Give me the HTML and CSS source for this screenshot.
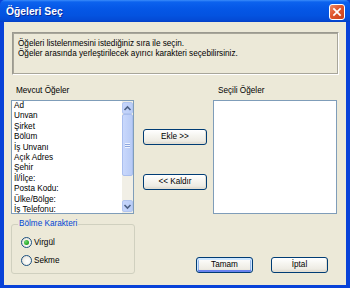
FILE: index.html
```html
<!DOCTYPE html>
<html lang="tr">
<head>
<meta charset="utf-8">
<title>Öğeleri Seç</title>
<link rel="stylesheet" href="styles.css">
</head>
<body>
<div class="window">
  <div class="titlebar">
    <span class="title">Öğeleri Seç</span>
    <span class="close">
      <svg width="16" height="16" viewBox="0 0 16 16"><path d="M4.5 4.5 L11.5 11.5 M11.5 4.5 L4.5 11.5" stroke="#fff" stroke-width="2" stroke-linecap="square"/></svg>
    </span>
  </div>
  <div class="client">
    <div class="info">
      <p>Öğeleri listelenmesini istediğiniz sıra ile seçin.</p>
      <p>Öğeler arasında yerleştirilecek ayırıcı karakteri seçebilirsiniz.</p>
    </div>
    <div class="lists">
      <div class="col col-left">
        <div class="label">Mevcut Öğeler</div>
        <div class="listbox">
          <ul class="items">
            <li>Ad</li>
            <li>Unvan</li>
            <li>Şirket</li>
            <li>Bölüm</li>
            <li>İş Unvanı</li>
            <li>Açık Adres</li>
            <li>Şehir</li>
            <li>İl/İlçe:</li>
            <li>Posta Kodu:</li>
            <li>Ülke/Bölge:</li>
            <li>İş Telefonu:</li>
          </ul>
          <div class="scrollbar">
            <div class="arrow">
              <svg width="9" height="9" viewBox="0 0 9 9"><path d="M1.5 6 L4.5 3 L7.5 6" fill="none" stroke="#4D6185" stroke-width="1.6"/></svg>
            </div>
            <div class="thumb"><span class="grip"></span></div>
            <div class="track"></div>
            <div class="arrow">
              <svg width="9" height="9" viewBox="0 0 9 9"><path d="M1.5 3 L4.5 6 L7.5 3" fill="none" stroke="#4D6185" stroke-width="1.6"/></svg>
            </div>
          </div>
        </div>
      </div>
      <div class="mid">
        <button class="btn">Ekle &gt;&gt;</button>
        <button class="btn">&lt;&lt; Kaldır</button>
      </div>
      <div class="col col-right">
        <div class="label">Seçili Öğeler</div>
        <div class="listbox"></div>
      </div>
    </div>
    <div class="bottom">
      <fieldset class="group">
        <legend>Bölme Karakteri</legend>
        <label class="radio"><span class="circle checked"></span>Virgül</label>
        <label class="radio"><span class="circle"></span>Sekme</label>
      </fieldset>
      <div class="actions">
        <button class="btn btn-default">Tamam</button>
        <button class="btn">İptal</button>
      </div>
    </div>
  </div>
</div>
</body>
</html>
```
FILE: styles.css
```css
* { box-sizing: border-box; }
html, body { margin: 0; padding: 0; }
body {
  width: 350px;
  height: 288px;
  overflow: hidden;
  font-family: "Liberation Sans", Arial, sans-serif;
  font-size: 8.2px;
  color: #000;
}
.window {
  width: 350px;
  height: 288px;
  display: flex;
  flex-direction: column;
  background: #0842D8;
}
.titlebar {
  height: 22px;
  flex: none;
  display: flex;
  align-items: center;
  padding: 0 5px 0 6px;
  background: linear-gradient(#3A8CFA 0, #0C62EE 2px, #0557E6 40%, #0453E0 70%, #044BD6 90%, #0440C6 100%);
  border-radius: 5px 5px 0 0;
}
.title {
  flex: 1;
  color: #fff;
  font-weight: bold;
  font-size: 10.3px;
  text-shadow: 1px 1px 0 #0A2A9A;
  padding-top: 1px;
}
.close {
  width: 16px;
  height: 16px;
  margin-top: 1px;
  border: 1px solid #fff;
  border-radius: 3px;
  background: linear-gradient(135deg, #EE8A68 0, #E0552C 45%, #C7401A 100%);
  display: flex;
  align-items: center;
  justify-content: center;
}
.close svg { display: block; }
.client {
  flex: 1;
  margin: 0 4px 3px 4px;
  background: #ECE9D8;
  display: flex;
  flex-direction: column;
}
.info {
  margin: 10px 7px 0 8px;
  height: 43px;
  border: 1px solid #9B9A90;
  border-right-color: #fff;
  border-bottom-color: #fff;
  box-shadow: inset 1px 1px 0 #C9C6B8;
  outline: 1px solid #A8A69A;
  outline-offset: -2px;
  padding: 6px 5px 0 5px;
}
.info p {
  margin: 0;
  line-height: 10px;
}
.lists {
  display: flex;
  margin: 11px 0 0 7px;
}
.col { display: flex; flex-direction: column; }
.col-left { width: 123px; }
.col-right { width: 124px; margin-left: 6px; }
.label {
  height: 14px;
  line-height: 10px;
  padding-left: 5px;
}
.listbox {
  height: 114px;
  border: 1px solid #7F9DB9;
  background: #fff;
  display: flex;
  overflow: hidden;
}
.items {
  flex: 1;
  list-style: none;
  margin: 0;
  padding: 0 0 0 2px;
  overflow: hidden;
}
.items li {
  line-height: 10.4px;
  white-space: nowrap;
}
.scrollbar {
  width: 11px;
  flex: none;
  display: flex;
  flex-direction: column;
  background: #F1EFE6;
  padding: 1px 0;
}
.arrow {
  height: 12px;
  flex: none;
  background: linear-gradient(90deg, #C6D5FB, #BACDF7);
  border: 1px solid #B2C5EF;
  border-radius: 2px;
  display: flex;
  align-items: center;
  justify-content: center;
}
.arrow svg { display: block; }
.thumb {
  height: 62px;
  flex: none;
  background: linear-gradient(90deg, #C9D8FC, #B8CBF6);
  border: 1px solid #A9BEEE;
  border-radius: 2px;
  display: flex;
  align-items: center;
  justify-content: center;
}
.grip {
  width: 5px;
  height: 5px;
  background: repeating-linear-gradient(#EEF3FE 0, #EEF3FE 1px, #8CA6DE 1px, #8CA6DE 2px);
}
.track { flex: 1; }
.mid {
  width: 64px;
  margin-left: 9px;
  padding-top: 43px;
  display: flex;
  flex-direction: column;
  gap: 29px;
}
.btn {
  height: 16px;
  padding: 0;
  margin: 0;
  border: 1px solid #003C74;
  border-radius: 3px;
  background: linear-gradient(#FFFFFF 0, #F6F5F0 40%, #EDEBE3 80%, #D8D3C8 100%);
  box-shadow: inset -1px -1px 0 #E3DFD3;
  font-family: "Liberation Sans", Arial, sans-serif;
  font-size: 8.2px;
  font-weight: normal;
  color: #000;
  line-height: 14px;
}
.mid .btn { width: 64px; }
.bottom {
  display: flex;
  align-items: flex-end;
  margin: 5px 0 0 7px;
}
.group {
  width: 124px;
  margin: 0;
  border: 1px solid #D0D0BF;
  border-radius: 3px;
  padding: 4px 4px 4px 9px;
}
.group legend {
  color: #0046D5;
  line-height: 10px;
  padding: 0 1px;
  margin-left: -3px;
}
.radio {
  display: flex;
  align-items: center;
  height: 18px;
  gap: 2px;
}
.circle {
  width: 11px;
  height: 11px;
  border: 1px solid #1C5180;
  border-radius: 50%;
  background: radial-gradient(circle at 60% 60%, #FFFFFF 0, #F4F3EE 45%, #D9D5CB 100%);
  display: flex;
  align-items: center;
  justify-content: center;
}
.circle.checked::after {
  content: "";
  width: 5px;
  height: 5px;
  border-radius: 50%;
  background: radial-gradient(circle at 35% 35%, #6FDB6F, #21A121 70%);
}
.actions {
  margin-left: auto;
  margin-right: 18px;
  margin-bottom: 1px;
  display: flex;
  gap: 18px;
}
.actions .btn { width: 57px; }
.btn-default {
  box-shadow: inset 0 1px 0 1px #CEE7FF, inset 0 -1px 0 1px #6982EE, inset 1px 0 0 1px #98B8EA, inset -1px 0 0 1px #98B8EA;
}
```
